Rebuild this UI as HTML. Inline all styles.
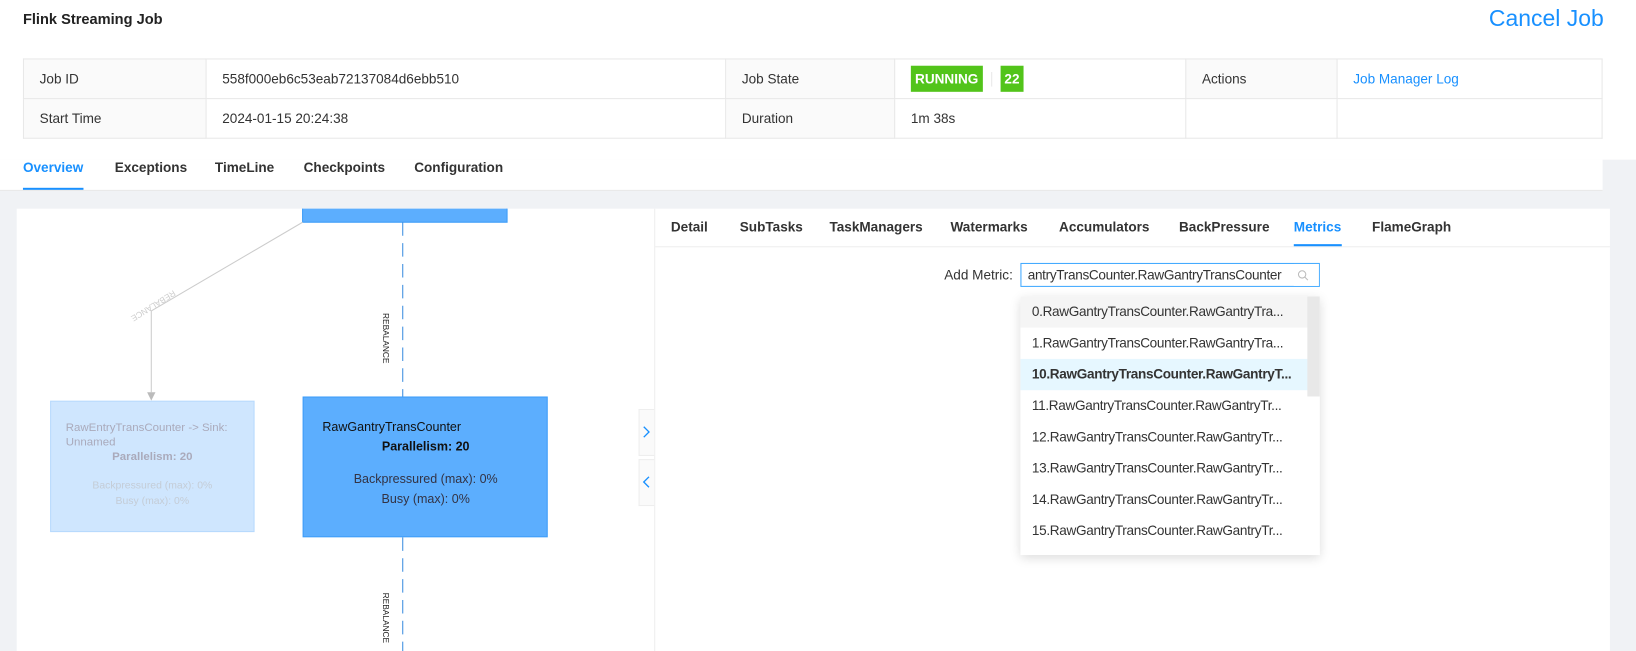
<!DOCTYPE html>
<html><head><meta charset="utf-8"><style>
*{box-sizing:border-box;margin:0;padding:0}
body{width:1636px;height:624px;overflow:hidden;background:#f0f2f5;font-family:"Liberation Sans",sans-serif;font-size:13px;color:#333;position:relative}
#w{position:absolute;left:0;top:0;width:1568px;height:598px;transform:scale(1.04337);transform-origin:0 0}
.abs{position:absolute}
table{border-collapse:collapse;position:absolute;left:22px;top:56px;width:1514px;table-layout:fixed}
td{border:1px solid #e8e8e8;height:38px;padding:0 15px;font-size:13px}
td.l{background:#fafafa}
.badge{display:inline-block;background:#52c41a;color:#fff;font-weight:bold;font-size:13px;padding:0 4px;height:25px;line-height:25px;vertical-align:middle}
.tab{position:absolute;top:153px;font-size:13px;font-weight:bold;color:#333}
.rtab{position:absolute;top:210px;font-size:13px;font-weight:bold;color:#333}
.item{position:absolute;left:0;width:276px;height:30px;line-height:30px;padding-left:11px;font-size:13px;color:#333;white-space:nowrap;letter-spacing:-0.3px}
</style></head><body>
<div id="w">
<div class="abs" style="left:0;top:0;width:1568px;height:153px;background:#fff"></div>
<div class="abs" style="left:0;top:153px;width:1536px;height:30px;background:#fff"></div>
<div class="abs" style="left:22px;top:10px;font-size:14px;font-weight:bold;color:#222">Flink Streaming Job</div>
<div class="abs" style="left:1427px;top:5px;font-size:22px;color:#1890ff">Cancel Job</div>
<table>
<tr><td class="l" style="width:175px">Job ID</td><td style="width:498px">558f000eb6c53eab72137084d6ebb510</td><td class="l" style="width:162px">Job State</td><td style="width:279px"><span class="badge">RUNNING</span><span style="display:inline-block;width:1px;height:14px;background:#e8e8e8;margin:0 8px;vertical-align:middle"></span><span class="badge">22</span></td><td class="l" style="width:145px">Actions</td><td style="color:#1890ff">Job Manager Log</td></tr>
<tr><td class="l">Start Time</td><td>2024-01-15 20:24:38</td><td class="l">Duration</td><td>1m 38s</td><td></td><td></td></tr>
</table>
<div class="tab" style="left:22px;color:#1890ff">Overview</div>
<div class="abs" style="left:22px;top:180px;width:58px;height:2px;background:#1890ff"></div>
<div class="tab" style="left:110px">Exceptions</div>
<div class="tab" style="left:206px">TimeLine</div>
<div class="tab" style="left:291px">Checkpoints</div>
<div class="tab" style="left:397px">Configuration</div>
<div class="abs" style="left:0;top:182px;width:1536px;height:1px;background:#e8e8e8"></div>

<div class="abs" style="left:16px;top:200px;width:1527px;height:424px;background:#fff"></div>
<div class="abs" style="left:627px;top:200px;width:1px;height:424px;background:#eee"></div>

<svg class="abs" style="left:16px;top:200px" width="611" height="424">
<rect x="274" y="-2" width="196" height="15" fill="#5caefe" stroke="#3c9cf8"/>
<line x1="370" y1="13" x2="370" y2="180" stroke="#3c8ee0" stroke-dasharray="13,7"/>
<line x1="370" y1="315" x2="370" y2="424" stroke="#3c8ee0" stroke-dasharray="13,7"/>
<polyline points="274,13 129,98 129,176" fill="none" stroke="#ccc"/>
<polygon points="125,176 133,176 129,184" fill="#bbb"/>
<text x="0" y="0" transform="translate(150,78) rotate(-32) scale(-1,-1)" font-size="8" fill="#ccc" font-family="Liberation Sans">REBALANCE</text>
<text transform="translate(351,100) rotate(90)" font-size="8" fill="#222" font-family="Liberation Sans">REBALANCE</text>
<text transform="translate(351,368) rotate(90)" font-size="8" fill="#222" font-family="Liberation Sans">REBALANCE</text>
<rect x="32.5" y="184.5" width="195" height="125" fill="#cfe6fe" stroke="#b6d9fd"/>
<text x="47" y="213" font-size="11" fill="#aab">RawEntryTransCounter -&gt; Sink:</text>
<text x="47" y="227" font-size="11" fill="#aab">Unnamed</text>
<text x="130" y="241" font-size="11" fill="#aab" font-weight="bold" text-anchor="middle">Parallelism: 20</text>
<text x="130" y="268" font-size="10" fill="#c4ccd6" text-anchor="middle">Backpressured (max): 0%</text>
<text x="130" y="283" font-size="10" fill="#c4ccd6" text-anchor="middle">Busy (max): 0%</text>
<rect x="274.5" y="180.5" width="234" height="134" fill="#5caefe" stroke="#3c9cf8"/>
<text x="293" y="213" font-size="12" fill="#111">RawGantryTransCounter</text>
<text x="392" y="232" font-size="12" fill="#111" font-weight="bold" text-anchor="middle">Parallelism: 20</text>
<text x="392" y="263" font-size="12" fill="#334" text-anchor="middle">Backpressured (max): 0%</text>
<text x="392" y="282" font-size="12" fill="#334" text-anchor="middle">Busy (max): 0%</text>
</svg>
<div class="abs" style="left:612px;top:392px;width:15px;height:45px;background:#fafafa;border:1px solid #eee;border-right:none"></div>
<div class="abs" style="left:612px;top:440px;width:15px;height:45px;background:#fafafa;border:1px solid #eee;border-right:none"></div>
<svg class="abs" style="left:612px;top:392px" width="15" height="95"><polyline points="5,17 10,22 5,27" fill="none" stroke="#1890ff" stroke-width="1.3"/><polyline points="10,65 5,70 10,75" fill="none" stroke="#1890ff" stroke-width="1.3"/></svg>

<div class="rtab" style="left:643px">Detail</div>
<div class="rtab" style="left:709px">SubTasks</div>
<div class="rtab" style="left:795px">TaskManagers</div>
<div class="rtab" style="left:911px">Watermarks</div>
<div class="rtab" style="left:1015px">Accumulators</div>
<div class="rtab" style="left:1130px">BackPressure</div>
<div class="rtab" style="left:1240px;color:#1890ff">Metrics</div>
<div class="rtab" style="left:1315px">FlameGraph</div>
<div class="abs" style="left:628px;top:236px;width:915px;height:1px;background:#eee"></div>
<div class="abs" style="left:1240px;top:234px;width:46px;height:2px;background:#1890ff"></div>

<div class="abs" style="left:905px;top:256px;font-size:13px">Add Metric:</div>
<div class="abs" style="left:978px;top:252px;width:287px;height:23px;border:1px solid #40a9ff;overflow:hidden;white-space:nowrap;font-size:13px;line-height:21px;padding-left:6px;letter-spacing:-0.3px">antryTransCounter.RawGantryTransCounter</div>
<div class="abs" style="left:1240px;top:253px;width:24px;height:21px;background:#fff"></div>
<svg class="abs" style="left:1243px;top:258px" width="12" height="12"><circle cx="5" cy="5" r="3.5" fill="none" stroke="#bbb"/><line x1="7.5" y1="7.5" x2="10.5" y2="10.5" stroke="#bbb"/></svg>
<div class="abs" style="left:978px;top:284px;width:287px;height:248px;background:#fff;box-shadow:0 3px 10px rgba(0,0,0,.15);overflow:hidden">
<div class="item" style="top:0;background:#f5f5f5">0.RawGantryTransCounter.RawGantryTra...</div>
<div class="item" style="top:30px">1.RawGantryTransCounter.RawGantryTra...</div>
<div class="item" style="top:60px;background:#e6f7ff;font-weight:bold">10.RawGantryTransCounter.RawGantryT...</div>
<div class="item" style="top:90px">11.RawGantryTransCounter.RawGantryTr...</div>
<div class="item" style="top:120px">12.RawGantryTransCounter.RawGantryTr...</div>
<div class="item" style="top:150px">13.RawGantryTransCounter.RawGantryTr...</div>
<div class="item" style="top:180px">14.RawGantryTransCounter.RawGantryTr...</div>
<div class="item" style="top:210px">15.RawGantryTransCounter.RawGantryTr...</div>
<div class="abs" style="left:275px;top:0;width:12px;height:96px;background:#e8e8e8"></div>
</div>
</div>
</body></html>
